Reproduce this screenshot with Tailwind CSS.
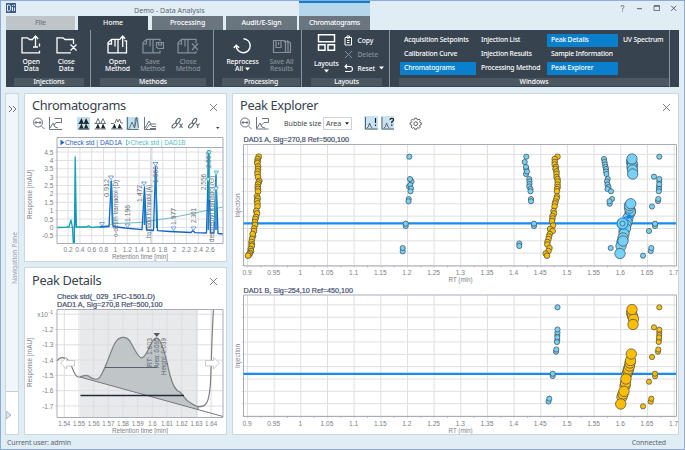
<!DOCTYPE html>
<html lang="en">
<head>
    <meta charset="UTF-8">
    <meta name="viewport" content="width=device-width, initial-scale=1.0">
    <title>Demo - Data Analysis</title>
    <script src="https://cdn.jsdelivr.net/npm/@tailwindcss/browser@4"></script>
</head>
<body class="overflow-hidden font-['Noto_Sans','Open_Sans',sans-serif]">
<div class="w-[685px] h-[450px] flex flex-col bg-[#e1edf5] border border-[#8eaadb] text-[7px] leading-[7px] text-[#3c4650]">

    <!-- Title bar and tabs -->
    <header class="h-[29px] flex shrink-0">
        <div class="w-[298px] flex flex-col justify-between pl-[5px]">
            <div class="flex items-center h-[15px] pt-[3px]">
                <svg class="w-[10px] h-[10px] -mt-[5px]" viewBox="0 0 10 10">
                    <rect width="10" height="10" fill="#3d5a8c"/>
                    <path d="M1.5 2v6h1.6q1.6 0 1.6-3t-1.6-3zM6.5 2v1M6.5 4v4M8.4 1.5v1.5M8.4 4.5v3.5" fill="none" stroke="#e1edf5" stroke-width="1"/>
                </svg>
                <span class="ml-[118px] text-[7.1px] text-[#5b6670]">Demo - Data Analysis</span>
            </div>
            <div class="flex h-[14px] text-white font-medium text-center leading-[14px] tracking-[-0.1px]">
                <div class="w-[69px] bg-[#bfc4c8] text-[#6a747e]">File</div>
                <div class="w-[70px] ml-[3px] bg-[#37434f]">Home</div>
                <div class="w-[71px] ml-[4px] bg-[#6b757f]">Processing</div>
                <div class="w-[71px] ml-[3px] bg-[#6b757f]">Audit/E-Sign</div>
            </div>
        </div>
        <div class="w-[71px] flex flex-col text-white font-medium text-center leading-[14px] tracking-[-0.3px]">
            <div class="h-[2px] bg-[#0a80cc]"></div>
            <div class="h-[13px] bg-[#b5d6eb]"></div>
            <div class="h-[14px] bg-[#6b757f]">Chromatograms</div>
        </div>
        <div class="flex-1 flex justify-end pr-[7px]">
            <svg class="w-[60px] h-[16px]" viewBox="616 1 60 16" fill="none" stroke="#55606a" stroke-width="1">
                <path d="M620 6.8q0-1.3 1.5-1.3t1.5 1.3q0 .8-.8 1.3t-.7 1.4M621.5 10.5v1" stroke-width=".9"/>
                <path d="M636 8.7h5"/>
                <path d="M653 5.8h5.500v4.700h-5.500z" stroke-width=".8"/><path d="M653 6h5.500" stroke-width="1.300"/>
                <path d="M670.200 5.800l5 5M675.200 5.800l-5 5"/>
            </svg>
        </div>
    </header>

    <!-- Ribbon -->
    <section class="ml-[5px] w-[673px] h-[57px] shrink-0 bg-[#37434f] flex text-white font-medium text-[6.8px] tracking-[-0.1px]">
        <div class="w-[85px] flex flex-col justify-between pl-[8px] pr-[6px] pb-px border-r border-[#8b949c]">
            <div class="flex text-center pt-[4px]">
                <div class="w-[37px] flex flex-col items-center">
                    <svg class="w-[20px] h-[21px]" viewBox="23 34 20 21" fill="none" stroke="#fff" stroke-width="1.3">
                        <path d="M35 39.500h-3.500l-2-1.700h-5.500v15h17.500v-2M41.500 43.500v3M37.500 47.500V36M34.800 39l2.700-3 2.700 3M35 47h5"/>
                    </svg>
                    <span class="mt-[3px]">Open</span><span>Data</span>
                </div>
                <div class="w-[38px] flex flex-col items-center">
                    <svg class="w-[22px] h-[21px]" viewBox="60 34 22 21" fill="none" stroke="#fff" stroke-width="1.3">
                        <path d="M78.500 44v-4.500h-8.500l-2-1.700h-6v15h14M75.500 44.500l6 6M81.500 44.500l-6 6"/>
                    </svg>
                    <span class="mt-[3px]">Close</span><span>Data</span>
                </div>
            </div>
            <div class="h-[8px] leading-[8px] bg-[#4c5762] text-center">Injections</div>
        </div>
        <div class="w-[123px] flex flex-col justify-between pl-[9px] pr-[7px] pb-px border-r border-[#8b949c]">
            <div class="flex text-center pt-[4px]">
                <div class="w-[37px] flex flex-col items-center">
                    <svg class="w-[21px] h-[21px]" viewBox="108 34 21 21" fill="none" stroke="#fff" stroke-width="1.3">
                        <path d="M109 52.800v-10l3.500-3.500h6.500v13.500zM119 52.800h8.500v-12h-2M112.500 39.500v4.500h-3M116 39.500v7M119 39.300h2.500M123.700 47V36M121.300 38.700l2.400-2.700 2.400 2.700"/>
                    </svg>
                    <span class="mt-[3px]">Open</span><span>Method</span>
                </div>
                <div class="w-[37px] flex flex-col items-center text-[#87909a]">
                    <svg class="w-[22px] h-[21px]" viewBox="146 34 22 21" fill="none" stroke="currentColor" stroke-width="1.2">
                        <path d="M147 52.800v-10l3.500-3.500h6.500v13.500zM157 52.800h7v-2.500M150.500 39.500v4.500h-3M154 39.500v7M157 39.300h7v2"/>
                        <path d="M160.500 42.500h7v6h-5.500l-1.500-1.500zM162.500 42.500v2.500h3v-2.500"/>
                    </svg>
                    <span class="mt-[3px]">Save</span><span>Method</span>
                </div>
                <div class="w-[38px] flex flex-col items-center text-[#87909a]">
                    <svg class="w-[22px] h-[21px]" viewBox="184 34 22 21" fill="none" stroke="currentColor" stroke-width="1.2">
                        <path d="M185 52.800v-10l3.500-3.500h6.500v13.500zM195 52.800h8v-1.500M188.500 39.500v4.500h-3M192 39.500v7M195 39.300h8v4M199 43.500l6 6.500M205 43.500l-6 6.500"/>
                    </svg>
                    <span class="mt-[3px]">Close</span><span>Method</span>
                </div>
            </div>
            <div class="h-[8px] leading-[8px] bg-[#4c5762] text-center">Methods</div>
        </div>
        <div class="w-[88px] flex flex-col justify-between pl-[8px] pb-px pr-px border-r border-[#8b949c]">
            <div class="flex text-center pt-[4px]">
                <div class="w-[41px] flex flex-col items-center">
                    <svg class="w-[20px] h-[21px]" viewBox="232 34 20 21" fill="none" stroke="#fff" stroke-width="1.4">
                        <path d="M242.500 38.700a7 7 0 1 1-7.300 7.300M232.800 48l2.400-2.800 3 2.500"/>
                    </svg>
                    <span class="mt-[3px]">Reprocess</span>
                    <span class="flex items-center gap-[2px]">All <svg class="w-[5px] h-[4px]" viewBox="0 0 5 4"><path d="M0 .5h5L2.500 3.500z" fill="#fff"/></svg></span>
                </div>
                <div class="w-[37px] flex flex-col items-center text-[#87909a]">
                    <svg class="w-[20px] h-[21px]" viewBox="271 34 20 21" fill="none" stroke="currentColor" stroke-width="1.2">
                        <path d="M272.500 40.500h10l2 2v10h-12zM275 40.500v7h5v-6.500M277.500 42v3M283 40.500l4 2v10h-2.500M286 40.500l3.500 2.500v9.500h-2.500"/>
                    </svg>
                    <span class="mt-[3px]">Save All</span><span>Results</span>
                </div>
            </div>
            <div class="h-[8px] leading-[8px] bg-[#4c5762] text-center">Processing</div>
        </div>
        <div class="w-[88px] flex flex-col justify-between pl-[9px] pr-[5px] pb-px border-r border-[#8b949c]">
            <div class="flex">
                <div class="w-[32px] pl-px pt-[3px] flex flex-col items-center">
                    <svg class="w-[19px] h-[19px]" viewBox="317 33 19 19" fill="none" stroke="#fff" stroke-width="1.5">
                        <path d="M318.500 34.700h16v7h-16zM318.500 44.700h6.500v5.500h-6.500zM328 44.700h6.500v5.500h-6.500z"/>
                    </svg>
                    <span class="mt-[8px]">Layouts</span>
                    <svg class="w-[5px] h-[4px] mt-[2px]" viewBox="0 0 5 4"><path d="M0 .5h5L2.500 3.500z" fill="#fff"/></svg>
                </div>
                <div class="flex flex-col pt-[3px] pl-[4px]">
                    <div class="h-[14px] flex items-center gap-[4px]">
                        <svg class="w-[9px] h-[11px]" viewBox="0 0 9 11" fill="none" stroke="#fff" stroke-width="1"><path d="M1 2.500h6.500v7.500h-6.500zM3 1h2.500v2h-2.500zM3 5.500h2.500M3 7.500h2.500"/></svg>
                        <span>Copy</span>
                    </div>
                    <div class="h-[14px] flex items-center gap-[4px] text-[#87909a]">
                        <svg class="w-[9px] h-[9px]" viewBox="0 0 9 9" fill="none" stroke="currentColor" stroke-width="1"><path d="M1 1l7 7M8 1l-7 7"/></svg>
                        <span>Delete</span>
                    </div>
                    <div class="h-[14px] flex items-center gap-[4px]">
                        <svg class="w-[9px] h-[9px]" viewBox="0 0 9 9" fill="none" stroke="#fff" stroke-width="1.1"><path d="M3 .5L1 2.500l2 2M1 2.500h5q2.500 0 2.500 2.500t-2.500 2.500h-5"/></svg>
                        <span>Reset</span>
                        <svg class="w-[5px] h-[4px]" viewBox="0 0 5 4"><path d="M0 .5h5L2.500 3.500z" fill="#fff"/></svg>
                    </div>
                </div>
            </div>
            <div class="mr-[2px] h-[8px] leading-[8px] bg-[#4c5762] text-center">Layouts</div>
        </div>
        <div class="w-[280px] flex flex-col justify-between pl-[9px] pb-px border-r border-[#8b949c]">
            <div class="flex pt-[4px] pl-px leading-[12px] whitespace-nowrap tracking-[-0.18px]">
                <div class="w-[76px] flex flex-col gap-[2px]">
                    <div class="h-[12px] pl-[4px]">Acquisition Setpoints</div>
                    <div class="h-[12px] pl-[4px]">Calibration Curve</div>
                    <div class="h-[13px] pl-[4px] bg-[#0a80cc]">Chromatograms</div>
                </div>
                <div class="w-[71px] flex flex-col gap-[2px]">
                    <div class="h-[12px] pl-[5px]">Injection List</div>
                    <div class="h-[12px] pl-[5px]">Injection Results</div>
                    <div class="h-[13px] pl-[5px]">Processing Method</div>
                </div>
                <div class="w-[71px] flex flex-col gap-[2px]">
                    <div class="h-[13px] -mb-px pl-[4px] bg-[#0a80cc]">Peak Details</div>
                    <div class="h-[12px] pl-[4px]">Sample Information</div>
                    <div class="h-[13px] pl-[4px] bg-[#0a80cc]">Peak Explorer</div>
                </div>
                <div class="pl-[5px]">UV Spectrum</div>
            </div>
            <div class="h-[8px] leading-[8px] bg-[#4c5762] text-center">Windows</div>
        </div>
    </section>

    <!-- Panels -->
    <main class="flex-1 flex pl-[4px] pt-[6px]">
        <aside class="w-[14px] h-[342px] flex flex-col bg-[#f1f6fa] border border-[#cbd7e0]">
            <svg class="w-[12px] h-[297px]" viewBox="6 94 12 297">
                <path d="M9 106l3 3-3 3M13 106l3 3-3 3" fill="none" stroke="#5b6670" stroke-width=".9"/>
                <text transform="translate(17 284) rotate(-90)" textLength="52" lengthAdjust="spacingAndGlyphs" fill="#98a2ab" class="text-[7px]">Navigation Pane</text>
            </svg>
            <div class="flex-1 bg-white border-t border-[#c3cfd8] pt-[17px]">
                <svg class="w-[7px] h-[12px]" viewBox="0 0 7 12"><path d="M0 2l5 4-5 4z" fill="#dbe8f0" stroke="#8fa3b0" stroke-width=".8"/></svg>
            </div>
        </aside>

        <div class="ml-[5px] flex flex-col gap-[5px]">
            <section class="w-[203px] h-[169px] bg-white border border-[#ccd6de]">
                <div class="h-[42px] pl-[7px] pr-[8px]">
                    <div class="flex justify-between items-center h-[22px]">
                        <h2 class="text-[12.8px] tracking-[-0.35px] text-[#37434f]">Chromatograms</h2>
                        <svg class="w-[9px] h-[9px] mt-[4px]" viewBox="0 0 9 9"><path d="M1 1l7 7M8 1l-7 7" stroke="#6c7780" stroke-width=".9"/></svg>
                    </div>
                    <svg class="w-[192px] h-[16px]" viewBox="32 116 192 16" fill="none" stroke="#5b6670" stroke-width=".9">
                        <g fill="#bfe0f0" stroke="none"><rect x="77" y="117" width="13" height="13"/><rect x="126" y="117" width="13" height="13"/></g>
                        <circle cx="38" cy="122.500" r="4.500"/><path d="M41.500 126l3 3M35 122.500h6M36.500 121l-1.500 1.500 1.500 1.500M39.500 121l1.500 1.500-1.500 1.500"/>
                        <path d="M49.500 117v12.500h12.500M50 128l3-5 2 4 3 1M54.500 118.500h7v4h-5.500l-2 3"/>
                        <path d="M78.500 123.500h10.500M78.500 129h10.500" stroke="#222"/>
                        <g fill="#1c2730" stroke="none">
                            <path d="M79 123l2.500-5 2 5zM84 123l2-5 2.500 5zM79 128.500l2.500-5 2 5zM84 128.500l2-5 2.500 5z"/>
                            <path d="M95.500 128.500l2.500-5 2 5zM101 128.500l2-5 2.500 5zM112 128.500l2.500-5 2 5zM117.500 128.500l2-5 2.500 5z"/>
                        </g>
                        <path d="M94.500 123.500h11.500M94.500 129h11.500M96 123l2-4.500 2 4.500M101 123l2-4.500 2 4.500M111 129h12M111 123.500h3M115 123l1.500-4 1.500 3 1.500-3 1.500 4h2"/>
                        <path d="M127.500 117v12.500h11M129 129l3-7 2.500 6 2-9v-2M134.500 128l1-10M137 118l1.500 10"/>
                        <path d="M144.500 117v12.500h11.500M145 128l4-7 2 3h5M146 129l4-5 2 2.500h4M150 128.500h6"/>
                        <g stroke-width="1.100">
                            <ellipse cx="174.500" cy="125.500" rx="1.600" ry="3" transform="rotate(45 174.500 125.500)"/><ellipse cx="178" cy="121" rx="1.600" ry="3" transform="rotate(35 178 121)"/><path d="M179.500 123.500l3 4.500M182.500 123.500l-3 4.500"/>
                            <ellipse cx="191" cy="125.500" rx="1.600" ry="3" transform="rotate(45 191 125.500)"/><ellipse cx="194.500" cy="121" rx="1.600" ry="3" transform="rotate(35 194.500 121)"/><path d="M196 123.500l1.700 2.200M199.500 123.500l-1.800 2.200v2.300"/>
                        </g>
                        <path d="M216 127h3.500l-1.750 2z" fill="#1c5030" stroke="none"/>
                    </svg>
                </div>
                <svg id="chromatogram" class="w-[200px] h-[125px] font-['Liberation_Sans',Arial,sans-serif] text-[6.6px]" viewBox="25 136 200 125"></svg>
            </section>

            <section class="w-[203px] h-[168px] bg-white border border-[#ccd6de]">
                <div class="flex justify-between items-center h-[24px] pl-[7px] pr-[8px]">
                    <h2 class="text-[12.8px] tracking-[-0.35px] text-[#37434f]">Peak Details</h2>
                    <svg class="w-[9px] h-[9px] mt-[3px]" viewBox="0 0 9 9"><path d="M1 1l7 7M8 1l-7 7" stroke="#6c7780" stroke-width=".9"/></svg>
                </div>
                <svg id="details" class="w-[200px] h-[142px] font-['Liberation_Sans',Arial,sans-serif] text-[6.6px]" viewBox="25 292 200 142"></svg>
            </section>
        </div>

        <section class="ml-[5px] w-[447px] h-[342px] bg-white border border-[#ccd6de]">
            <div class="h-[42px] pl-[7px] pr-[7px]">
                <div class="flex justify-between items-center h-[22px]">
                    <h2 class="text-[12.8px] tracking-[-0.35px] text-[#37434f]">Peak Explorer</h2>
                    <svg class="w-[9px] h-[9px] mt-[4px]" viewBox="0 0 9 9"><path d="M1 1l7 7M8 1l-7 7" stroke="#6c7780" stroke-width=".9"/></svg>
                </div>
                <div class="flex items-center h-[14px]">
                    <svg class="w-[33px] h-[14px]" viewBox="240 116 33 14" fill="none" stroke="#5b6670" stroke-width=".9">
                        <circle cx="245" cy="122.500" r="4.500"/><path d="M248.500 126l3 3M242 122.500h6M243.500 121l-1.500 1.500 1.500 1.500M246.500 121l1.500 1.500-1.500 1.500"/>
                        <path d="M256.500 117v12h12M257 128l3-5 2 4 3 1M262 118.500h6.500v4h-4.500l-3 3"/>
                    </svg>
                    <span class="ml-[11px] w-[39px] whitespace-nowrap">Bubble size</span>
                    <div class="w-[29px] h-[13px] flex items-center justify-between border border-[#ccd3d9] px-[2px]">
                        <span>Area</span>
                        <svg class="w-[4px] h-[3px]" viewBox="0 0 4 3"><path d="M0 .3h4L2 2.700z" fill="#222"/></svg>
                    </div>
                    <svg class="ml-[11px] w-[60px] h-[14px]" viewBox="363 116 60 14" fill="none" stroke="#4a5660" stroke-width=".9">
                        <g fill="#c9e3f2" stroke="none"><rect x="364" y="116" width="14" height="14"/><rect x="381" y="116" width="13" height="14"/></g>
                        <path d="M365.500 117v12h12M367 128q1.500 0 2.500-5 1.500 5 3 5M382 117v12h12M384 128q1.500 0 2.500-5 1.500 5 3 5"/>
                        <path d="M375.500 118v5M375.500 124.500v1.500M390 120q0-1.700 1.800-1.700t1.800 1.500q0 1.200-1.800 2v1.400M391.800 124.500v1.500" stroke="#16222c" stroke-width="1.200"/>
                        <path d="M414.800 118.100h1.800l.3 1.300 1 .4 1.200-.7 1.200 1.200-.7 1.200.4 1 1.300.3v1.800l-1.300.3-.4 1 .7 1.200-1.200 1.200-1.200-.7-1 .4-.3 1.300h-1.800l-.3-1.300-1-.4-1.200.7-1.200-1.200.7-1.200-.4-1-1.300-.3v-1.800l1.300-.3.4-1-.7-1.200 1.200-1.200 1.200.7 1-.4z"/>
                        <circle cx="415.700" cy="123.700" r="1.900"/>
                    </svg>
                </div>
            </div>
            <svg id="explorer" class="w-[445px] h-[298px] font-['Liberation_Sans',Arial,sans-serif] text-[6.6px]" viewBox="233 136 445 298"></svg>
        </section>
    </main>

    <!-- Status bar -->
    <footer class="h-[15px] shrink-0 flex justify-between items-center pl-[6px] pr-[18px] text-[#5b6670] tracking-[-0.12px]">
        <span>Current user: admin</span>
        <span>Connected</span>
    </footer>
</div>

<script>
    const GRID = '#dedfe3', FRAME = '#a9abb8', LABEL = '#7c8088', NAVY = '#445072';

    const line = (x1, y1, x2, y2, c = GRID, w = 1) =>
        `<line x1="${x1}" y1="${y1}" x2="${x2}" y2="${y2}" stroke="${c}" stroke-width="${w}"/>`;
    const text = (x, y, s, anchor = 'middle', len = 0, c = LABEL) =>
        `<text x="${x}" y="${y}" text-anchor="${anchor}" fill="${c}"${len ? ` textLength="${len}" lengthAdjust="spacingAndGlyphs"` : ''}>${s}</text>`;
    const vtext = (x, y, s, len, c = LABEL) =>
        `<text transform="translate(${x} ${y}) rotate(-90)" fill="${c}" textLength="${len}" lengthAdjust="spacingAndGlyphs">${s}</text>`;
    const path = (d, c, w = 1, fill = 'none') =>
        `<path d="${d}" fill="${fill}" stroke="${c}" stroke-width="${w}" stroke-linejoin="round"/>`;

    // Chromatogram overlay
    function drawChromatogram() {
        const px = t => 56.2 + 59.2 * t;
        const py = v => 227.4 - 16.75 * v;
        let s = '<rect x="150" y="148" width="2.500" height="95" fill="#dcdde1"/>';
        for (let i = 1; i <= 13; i++) {
            s += line(px(i * 0.2), 147, px(i * 0.2), 244);
            s += text(px(i * 0.2), 252.300, +(i * 0.2).toFixed(1));
        }
        for (let i = -1; i <= 9; i++) {
            s += line(55, py(i / 2), 223, py(i / 2));
            s += text(53.500, py(i / 2) + 2.500, i / 2, 'end');
        }
        s += path('M57 227.400H92L108 225.500 116 223.500 140 222.500 170 218 195 213 223 207', '#5fb8b4', 0.9);
        s += path('M57 227.500L66 227.300 69 226.500 71 220 72.500 228 73.300 243 74.300 243 75.200 157 76.400 227 86 227 88.500 225.800 91 227.300 104 226.800', '#14a3ae', 1.3);
        s += path('M74 243L75 205 76 227', '#1592c4', 1.200);
        s += path('M100 227L109 226.500 111.300 181 113 226.500 125 228 142 229.700 144.500 187 146.500 230 153.500 230.500 155.500 167 157.500 230.700 170 231.500 191 232.500 193 230.500 195 232.700 206.500 233 208.500 160 210.500 233 214 233 216 175 218 233.500 223 234', '#1463c8', 1.300);
        s += path('M111.300 181L112.500 224M144.500 195V225M155.700 172L156.800 228M208.300 150V230M216 180V230', '#0a86d0', 1.600);
        s += path('M209.300 150V200M214.500 222L216.500 180', '#38b5b0', 1.300);
        // peak markers
        for (const [x, y] of [[102, 222.500], [111, 176], [127.500, 224], [144, 182], [155.500, 162.500], [173.500, 227], [193.500, 227], [216, 187]])
            s += path(`M${x - 2.500} ${y}h5l-2.500 3.500z`, '#4d8fe0', 0.8, '#fff');
        for (const [x, y] of [[209, 151], [216, 171], [208, 178]])
            s += path(`M${x - 2} ${y}h4.500l-2.250 3.500z`, '#3fc0c0', 0.9, '#d9f4f4');
        const c = '#69707c';
        s += vtext(109, 197, '0.912', 18, c) + vtext(117.500, 237, 'o-desm tramadol (D)', 57, c)
           + vtext(130, 222, '1.196', 17, c) + vtext(142, 202, '1.472', 17, c)
           + vtext(150.500, 238, 'tramadol tramadol (A)', 53, c) + vtext(157.700, 183, '1.663', 17, c)
           + vtext(176, 225, '1.977', 17, c) + vtext(195.500, 223, '2.301', 15, c)
           + vtext(206, 190, '2.556', 16, c) + vtext(210.500, 168, '2.557', 16, c)
           + vtext(214, 242, 'desmethyl tramadol (G)', 66, c);
        s += '<rect x="57" y="137" width="166" height="10.500" fill="#fff"/>';
        s += path('M57 137.500H223V243.500H57Z M57 147.500H223', FRAME);
        s += '<path d="M60.500 139.800v5.500l4-2.750z" fill="#1463c8"/><path d="M126.500 139.800v5.500l3.600-2.750z" fill="#fff" stroke="#4cc3c3" stroke-width=".8"/>';
        s += text(65, 145.100, 'Check std | DAD1A', 'start', 57, '#1f62c4') + text(130.500, 145.100, 'Check std | DAD1B', 'start', 55, '#4fbcc4');
        s += vtext(31.500, 219, 'Response [mAU]', 49) + text(140, 259, 'Retention time [min]', 'middle', 56);
        document.getElementById('chromatogram').innerHTML = s;
    }

    // Single peak with baseline and integration limits
    function drawDetails() {
        let s = '<rect x="80" y="309" width="118" height="108" fill="#e8e9eb"/>';
        for (let i = 0; i < 11; i++) {
            const x = 64.300 + 14.680 * i;
            s += line(x, 309, x, 418, '#dcdde1');
            s += text(x, 426, +(1.54 + i * 0.01).toFixed(2), 'middle', i === 6 ? 8.5 : 12);
        }
        for (let i = 0; i < 7; i++) {
            const y = 314.200 + 15.300 * i;
            s += line(55, y, 223, y, '#dcdde1');
            if (i) s += text(53.500, y + 2.500, (-1.1 - i * 0.1).toFixed(1), 'end');
        }
        s += text(48, 317, 'x10', 'end') + '<text x="48.500" y="314" class="text-[5px]" fill="#7c8088">-1</text>';
        const curve = 'C84 375 88 375 90 377C94 380 98 380 100 377C107 366 110 352 115 343C119 336 127 335 131 343C135 350 138 357 141 357.800C146 358 149 347 152 342C155 337 158 337 160 341C165 350 167 364 170 375C173 387 176 391 180 392C184 396 186 401 190 402.500Q194 405.500 198 406.700';
        s += path('M80 377' + curve + 'V409.500Z', 'none', 0, '#c0c5c8');
        s += path('M57 361Q60 356 66 358.500C72 361 73 376 78 377L80 377' + curve + 'C206 407 209 404 210.500 383C211.500 360 212 330 213.500 309.500', '#7d7f82', 1.200);
        s += path('M80 377L223 416.500M198 406V409.500', '#75787e', 1);
        s += line(105, 367.500, 157, 367.500, '#59616b', 1) + line(80.500, 395.500, 184, 395.500, '#222a3c', 1.300);
        s += '<path d="M153.500 333h6.500l-3.250 4z" fill="#565b62"/>';
        s += vtext(151.500, 367, 'RT: 1.603', 29, '#5f6873') + vtext(158.500, 368, 'Area: 0.065', 30, '#5f6873') + vtext(166, 375, 'Height: 0.039', 37, '#5f6873');
        // integration limit handles
        s += path('M60.500 363l6-5.500v3h8v5.500h-8v3z', '#c3c5c8', 0.9, '#fff');
        s += path('M219.500 363l-6-5.500v3h-8v5.500h8v3z', '#c3c5c8', 0.9, '#fff');
        s += path('M57 309.500H223V417.500H57Z', FRAME);
        s += '<g stroke="#445072" stroke-width=".2">' + text(57, 299, 'Check std(_029_1FC-1501.D)', 'start', 98, NAVY) + text(57, 306.500, 'DAD1 A, Sig=270,8 Ref=500,100', 'start', 105.500, NAVY) + '</g>';
        s += vtext(31.500, 387, 'Response [mAU]', 49) + text(140, 433, 'Retention time [min]', 'middle', 56);
        document.getElementById('details').innerHTML = s;
    }

    const BLUE = '#75d1f7', ORANGE = '#ffbf00';

    // Each series: colour, radius, bubbles as [x, y]
    const seriesA = [
        [ORANGE, 2.9, [[258.7,156.7],[257.7,159],[257.5,161.5],[257.3,163],[258,166.5],[258,169],[257.7,171.500],[257.5,174],[258,177],[259.3,181],[258.500,182.500],[258,184.5],[257.700,187],[258,189],[258,191.5],[257,196.5],[257.700,198.500],[257,201],[257.5,203.500],[257.500,206.500],[256.3,211],[257,213.5],[256,217],[255.300,219],[255,222],[255,225],[254,228.500],[254,231],[253,236],[252.700,234],[252,239],[251.5,242],[251.7,244.500],[251.7,246],[250.7,249],[251,251],[250,253],[249,254.500],[248,255.7]]],
        [BLUE, 2.6, [[409.3,156.7],[411.500,181.500],[410,179],[409,186.500],[410.300,185],[411,188.500],[410.500,191.300],[408.700,199],[408.500,201.300],[405.700,226],[405.700,223.700],[402.700,251.300],[402.700,248]]],
        [BLUE, 2.6, [[526.3,156.7],[524.7,162],[526.300,169],[526,167],[526,174],[527,171.500],[529.300,179],[529.500,181.500],[529.500,184],[529.300,186.500],[530.500,189],[530.500,191.300],[531,199],[531,201.300],[534,226],[534,223.700],[519.3,243.5],[519.3,246]]],
        [ORANGE, 2.8, [[557.5,156.7],[554.7,159],[554.7,162],[554.7,164.500],[556,167],[555.5,169],[556.500,171.500],[556.5,174],[556.5,177],[557.5,179],[557.7,181.500],[557.5,184.5],[557.700,187],[557,189],[557,191.300],[557,196.500],[556.500,198.500],[555.5,201.500],[555,203.500],[554.500,206.500],[553.500,211],[554,213.500],[552.500,216],[552.5,218.5],[552,221],[553,225.500],[550,229],[552.7,231],[549.7,234],[549,236.5],[548.500,239],[547.5,242],[547.300,244.500],[549.5,248],[548.500,251],[545.700,253.500],[547,255.7]]],
        [BLUE, 2.6, [[604,159],[604.5,162],[605,164.500],[605.500,167],[606,169],[606,171.500],[606.5,174],[607.700,179],[607,181.500],[607.500,184.5],[608.5,187],[607.500,189],[611,191.3],[612,199],[609.7,203.7],[609.5,201.3],[610.7,248]]],
        [BLUE, 5.2, [[631.5,162],[632.500,164.500],[632,167],[632.500,170],[632,159],[632.700,174],[630,213],[628,218],[627,222],[626,225],[630.5,211],[629.5,208],[629.5,205.500],[630.700,203.7],[624,231],[625.500,228.500],[624,234],[623,238],[622,242],[621,246],[623,241],[620,253.5]]],
        [BLUE, 2.6, [[659.3,156.7],[654,176.7],[659.300,181.500],[659.3,179],[659,186.500],[659.3,184.3],[659,189],[658.8,191.3],[658,201],[658.3,199],[652,206.5],[655,226],[655,223.7],[649,231],[650.700,251],[651.3,248],[643,255.7]]]
    ];
    const seriesB = [
        [BLUE, 2.6, [[557.5,307.3],[557.3,335],[557.500,332.500],[557.5,329.5],[557.300,340],[557,342],[557.3,337.3],[556,351.700],[556.3,349.5],[552.7,376],[552.7,373.7],[548.500,401.500],[549.3,398.7]]],
        [ORANGE, 5.2, [[631.500,313],[632.500,316],[633.500,319],[632,309.5],[633,324.5],[627,374],[628,371],[628.500,369],[629.500,366],[630,363],[630.5,360.5],[631.3,354],[625,386],[625.5,383],[626,379],[622,397],[623,394],[624,391.3],[620.7,404]]],
        [ORANGE, 2.6, [[659.3,307.3],[654,327.3],[659.300,332.300],[659.3,329.700],[659.300,335],[659,339.500],[658.7,342],[659,337.3],[658,351.7],[658.3,349.5],[652,357],[655,376.3],[655,373.7],[649,381.7],[650.700,401.700],[651.3,398.7],[643,406.3]]]
    ];

    function drawExplorer() {
        const plot = (top, title, series) => {
            const bottom = top + 121.500;
            let s = '';
            for (let i = 0; i <= 16; i++) {
                const x = 247.500 + 26.660 * i;
                s += line(x, top, x, bottom + 2);
                s += line(x + 13.330, bottom, Math.min(x + 13.330, 676), bottom + 1.500, i < 16 ? '#bbb' : 'none');
                s += text(x - 0.500, bottom + 9, +(0.9 + i * 0.05).toFixed(2));
            }
            for (let i = 0; i < 10; i++) s += line(241.500, top + 9.900 + 12.350 * i, 676, top + 9.900 + 12.350 * i);
            s += path(`M243.500 ${top}H676.500V${bottom}H243.500Z`, FRAME);
            s += line(243.500, top + 78.800, 676, top + 78.800, '#168bf5', 2.200);
            for (const [fill, r, points] of series)
                for (const [x, y] of points)
                    s += `<circle cx="${x}" cy="${y}" r="${r}" fill="${fill}" stroke="#3d4a50" stroke-width=".7"/>`;
            s += `<g stroke="#445072" stroke-width=".2">${text(243.500, top - 2.400, title, 'start', title.length > 29 ? 109.500 : 105.500, NAVY)}</g>`;
            s += vtext(239.500, top + 73, 'Injection', 24) + text(460.500, bottom + 16, 'RT (min)', 'middle', 24);
            return s;
        };
        let s = plot(144.500, 'DAD1 A, Sig=270,8 Ref=500,100', seriesA);
        // selected bubble
        s += '<circle cx="622.500" cy="223.500" r="5.500" fill="#75d1f7" stroke="#168bf5" stroke-width="1.200"/><circle cx="622.500" cy="223.500" r="2.600" fill="#75d1f7" stroke="#3d4a50" stroke-width=".7"/><path d="M626 218l3-4.500 4.500 4-6.500 1.500z" fill="#0f86f0"/>';
        s += plot(295, 'DAD1 B, Sig=254,10 Ref=450,100', seriesB);
        document.getElementById('explorer').innerHTML = s;
    }

    drawChromatogram();
    drawDetails();
    drawExplorer();
</script>
</body>
</html>
